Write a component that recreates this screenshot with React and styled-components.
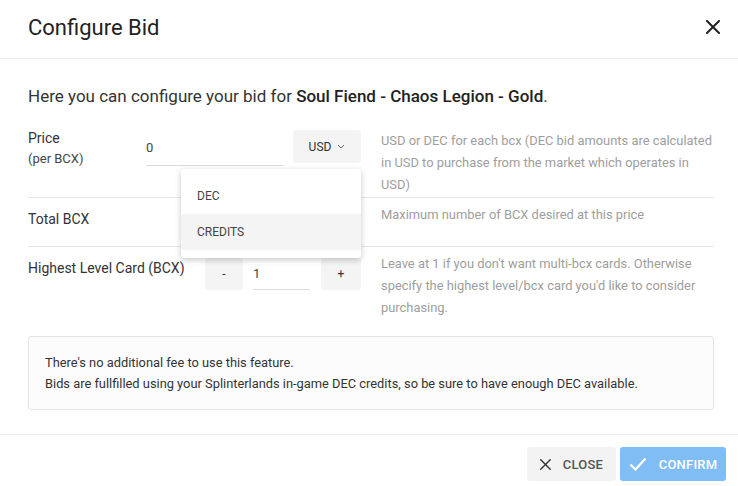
import React from "react";
import styled, { createGlobalStyle } from "styled-components";

const Global = createGlobalStyle`
  html, body { margin: 0; padding: 0; background: #fff; }
  body { font-family: Roboto, "Noto Sans", sans-serif; color: #333; }
  * { box-sizing: border-box; }
`;

const Modal = styled.div`
  width: 738px;
  height: 486px;
  display: flex;
  flex-direction: column;
  background: #fff;
`;

const Header = styled.div`
  height: 59px;
  padding: 0 15px 0 28px;
  display: flex;
  align-items: center;
  justify-content: space-between;
  border-bottom: 1px solid #ececec;
`;

const Title = styled.h2`
  margin: 0;
  font-size: 22px;
  font-weight: 400;
  color: #222;
  padding-bottom: 4px;
`;

const IconButton = styled.button`
  border: 0;
  background: none;
  padding: 0;
  width: 20px;
  height: 20px;
  display: flex;
  align-items: center;
  justify-content: center;
  cursor: pointer;
  margin-bottom: 4px;
`;

const Body = styled.div`
  padding: 25px 24px 24px 28px;
  flex: 1;
`;

const Intro = styled.p`
  margin: 0 0 16px;
  font-size: 17px;
  line-height: 24px;
  color: #333;
  b { font-weight: 500; color: #222; }
`;

const Row = styled.div`
  display: grid;
  grid-template-columns: 118px 215px 1fr;
  padding-top: 6px;
  border-bottom: ${(p) => (p.$last ? "none" : "1px solid #e6e6e6")};
`;

const Label = styled.div`
  font-size: 14px;
  line-height: 22px;
  color: #333;
  padding-top: ${(p) => p.$pt || 0}px;
  margin-top: ${(p) => p.$mt || 0}px;
  white-space: nowrap;
  small { display: block; font-size: 13px; line-height: 20px; color: #444; }
`;

const Controls = styled.div`
  position: relative;
  display: flex;
  align-items: flex-start;
  justify-content: flex-end;
  gap: 10px;
  min-height: 42px;
  padding-top: ${(p) => p.$pt || 0}px;
`;

const TextInput = styled.input`
  flex: ${(p) => (p.$w ? "none" : 1)};
  width: ${(p) => (p.$w ? `${p.$w}px` : "auto")};
  min-width: 0;
  height: ${(p) => p.$h || 36}px;
  border: 0;
  border-bottom: 1px solid #dcdcdc;
  outline: none;
  font-family: inherit;
  font-size: 13px;
  color: #444;
  padding: 0;
  background: transparent;
`;

const GreyButton = styled.button`
  width: ${(p) => p.$w}px;
  height: ${(p) => p.$h || 33}px;
  border: 0;
  border-radius: 3px;
  background: #f4f4f4;
  font-family: inherit;
  font-size: 12px;
  font-weight: 400;
  color: #333;
  display: flex;
  align-items: center;
  justify-content: center;
  gap: 6px;
  padding: 0;
  margin-left: ${(p) => p.$ml || 0}px;
`;

const Menu = styled.div`
  position: absolute;
  left: 35px;
  top: 39px;
  width: 180px;
  padding: 8px 0;
  background: #fff;
  border-radius: 3px;
  box-shadow: 0 2px 6px rgba(0, 0, 0, 0.22);
  z-index: 5;
`;

const MenuItem = styled.div`
  height: ${(p) => p.$h}px;
  padding: 0 16px;
  display: flex;
  align-items: center;
  font-size: 12px;
  font-weight: 400;
  color: #444;
  background: ${(p) => (p.$active ? "#f4f4f4" : "#fff")};
`;

const Desc = styled.div`
  padding-left: 20px;
  font-size: 12.9px;
  line-height: 22px;
  color: #9e9e9e;
  padding-bottom: 1px;
`;

const InfoBox = styled.div`
  margin-top: 16px;
  border: 1px solid #e4e4e4;
  border-radius: 3px;
  background: #fcfcfc;
  padding: 15px 16px;
  font-size: 12.85px;
  line-height: 21px;
  color: #333;
  p { margin: 0; }
`;

const Footer = styled.div`
  height: 52px;
  border-top: 1px solid #ececec;
  display: flex;
  justify-content: flex-end;
  align-items: flex-start;
  gap: 4px;
  padding: 12px 12px 0 0;
`;

const ActionButton = styled.button`
  height: 34px;
  width: ${(p) => p.$w}px;
  border: 0;
  border-radius: 3px;
  background: ${(p) => (p.$primary ? "#80bdf5" : "#f3f3f3")};
  color: ${(p) => (p.$primary ? "#fff" : "#555")};
  font-family: inherit;
  font-size: 13px;
  font-weight: 500;
  letter-spacing: 0.2px;
  display: flex;
  align-items: center;
  justify-content: center;
  gap: 12px;
  padding: 0;
`;

const Cross = ({ size = 14, stroke = "#222", w = 2 }) => (
  <svg width={size} height={size} viewBox="0 0 14 14">
    <path d="M1 1 L13 13 M13 1 L1 13" stroke={stroke} strokeWidth={w} strokeLinecap="square" />
  </svg>
);

const Chevron = () => (
  <svg width="8" height="5" viewBox="0 0 8 5">
    <path d="M1 1 L4 4 L7 1" stroke="#666" strokeWidth="1" fill="none" />
  </svg>
);

const Check = () => (
  <svg width="18" height="14" viewBox="0 0 18 14">
    <path d="M1.5 7.5 L6.5 12.5 L16.5 1.5" stroke="#fff" strokeWidth="2.2" fill="none" />
  </svg>
);

export default function App() {
  return (
    <Modal>
      <Global />
      <Header>
        <Title>Configure Bid</Title>
        <IconButton aria-label="close">
          <Cross />
        </IconButton>
      </Header>
      <Body>
        <Intro>
          Here you can configure your bid for <b>Soul Fiend - Chaos Legion - Gold</b>.
        </Intro>

        <Row>
          <Label $mt={-3}>
            Price
            <small>(per BCX)</small>
          </Label>
          <Controls>
            <TextInput defaultValue="0" />
            <GreyButton $w={68}>
              USD <Chevron />
            </GreyButton>
            <Menu>
              <MenuItem $h={37}>DEC</MenuItem>
              <MenuItem $h={36} $active>CREDITS</MenuItem>
            </Menu>
          </Controls>
          <Desc>
            USD or DEC for each bcx (DEC bid amounts are calculated in USD to purchase from
            the market which operates in USD)
          </Desc>
        </Row>

        <Row>
          <Label $pt={4}>Total BCX</Label>
          <Controls />
          <Desc>Maximum number of BCX desired at this price</Desc>
        </Row>

        <Row $last>
          <Label $pt={4}>Highest Level Card (BCX)</Label>
          <Controls $pt={5}>
            <GreyButton $w={38} $h={32}>-</GreyButton>
            <TextInput $w={57} $h={32} defaultValue="1" />
            <GreyButton $w={40} $h={32} $ml={1}>+</GreyButton>
          </Controls>
          <Desc>
            Leave at 1 if you don't want multi-bcx cards. Otherwise specify the highest
            level/bcx card you'd like to consider purchasing.
          </Desc>
        </Row>

        <InfoBox>
          <p>There's no additional fee to use this feature.</p>
          <p>
            Bids are fullfilled using your Splinterlands in-game DEC credits, so be sure to
            have enough DEC available.
          </p>
        </InfoBox>
      </Body>
      <Footer>
        <ActionButton $w={89}>
          <Cross size={11} stroke="#333" w={1.8} />
          CLOSE
        </ActionButton>
        <ActionButton $w={106} $primary>
          <Check />
          CONFIRM
        </ActionButton>
      </Footer>
    </Modal>
  );
}
